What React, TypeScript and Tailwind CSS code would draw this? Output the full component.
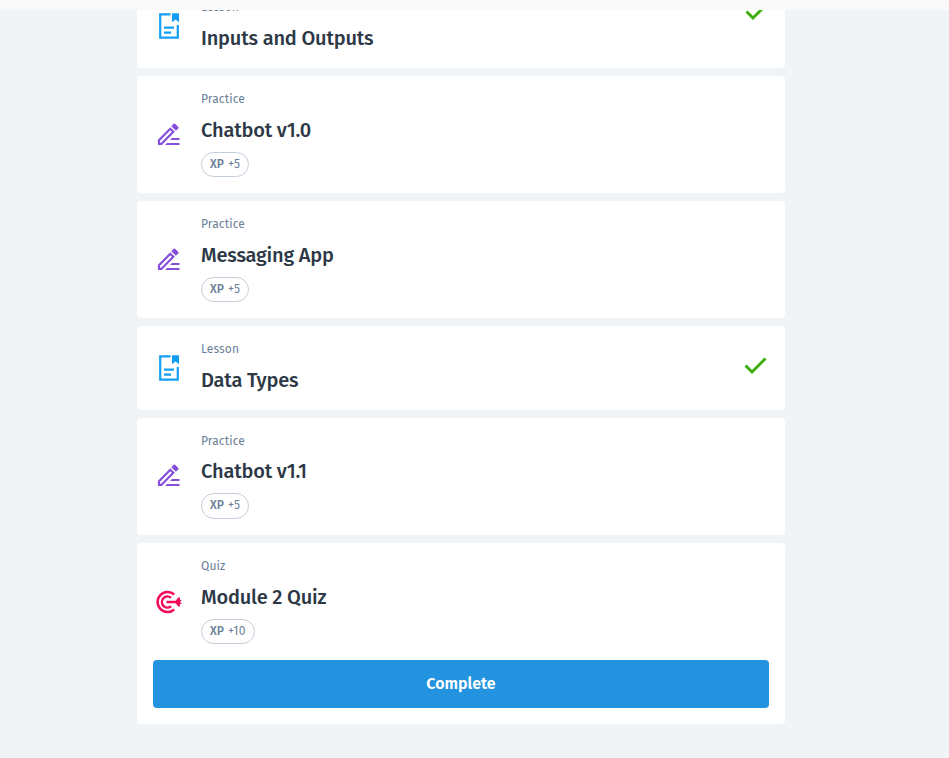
import React from "react";

type Kind = "Lesson" | "Practice" | "Quiz";

interface Item {
  kind: Kind;
  title: string;
  titleGap: string;
  iconGap?: string;
  badgeSize?: string;
  xp?: number;
  check?: string;
  action?: string;
}

const items: Item[] = [
  { kind: "Lesson", title: "Inputs and Outputs", titleGap: "mt-[10px]", check: "mr-[-4px] mb-[27px]" },
  { kind: "Practice", title: "Chatbot v1.0", titleGap: "mt-[10px]", xp: 5 },
  { kind: "Practice", title: "Messaging App", titleGap: "mt-[10px]", xp: 5 },
  { kind: "Lesson", title: "Data Types", titleGap: "mt-[10px]", check: "mr-[-3px] mb-[2px]" },
  {
    kind: "Practice",
    title: "Chatbot v1.1",
    titleGap: "mt-[9px]",
    iconGap: "mb-[2px]",
    badgeSize: "h-[26px] pb-[3px]",
    xp: 5,
  },
  { kind: "Quiz", title: "Module 2 Quiz", titleGap: "mt-[10px]", xp: 10, action: "Complete" },
];

function LessonIcon() {
  return (
    <svg width="32" height="32" viewBox="0 0 32 32" fill="none" stroke="#149ef2" strokeWidth="2.200">
      <path d="M17.500 4.300H7.200v23.400h17.600V15M11 17.600h10M11 22.600h7" />
      <path d="M19 3.200h7v9l-3.500-2.600L19 12.200z" fill="#149ef2" stroke="none" />
    </svg>
  );
}

function PracticeIcon() {
  return (
    <svg width="32" height="32" viewBox="0 -0.200 32 32" fill="none" stroke="#854fdc" strokeWidth="2.200">
      <path d="M6 24.700v-3.800L17.300 9.600l3 3L8.400 24.700z" />
      <path d="M18.300 7L20.700 4.600q.7-.7 1.400 0l3.200 3.200q.7.700 0 1.400L22.900 11.600z" fill="#854fdc" stroke="none" />
      <path d="M19 18.800H26.500v2.100H16.900zM14.100 23.700H26.500v2.100H12z" fill="#854fdc" stroke="none" />
    </svg>
  );
}

function QuizIcon() {
  return (
    <svg width="32" height="32" viewBox="0 0 32 32" fill="none" stroke="#f20a5c" strokeWidth="2.500">
      <path d="M21.200 8.500a10 10 0 1 0 0 15M18 11.800a5.500 5.500 0 1 0 0 8.400" />
      <path d="M13.500 16H24.500" />
      <path d="M21.700 16l3.500-4.600h1.700v2.600h2L27 16l1.900 2h-2v2.600h-1.700z" fill="#f20a5c" stroke="none" />
    </svg>
  );
}

const icons: Record<Kind, () => React.ReactElement> = {
  Lesson: LessonIcon,
  Practice: PracticeIcon,
  Quiz: QuizIcon,
};

function Card({ item }: { item: Item }) {
  const Icon = icons[item.kind];
  return (
    <section className="rounded bg-white p-4">
      <div className={`flex items-center ${item.xp !== undefined ? "h-[85px]" : "h-[52px]"}`}>
        <div className={`mr-4 h-8 w-8 shrink-0 ${item.iconGap ?? ""}`}>
          <Icon />
        </div>
        <div className="grow self-start">
          <p className="mt-px h-[13px] text-[12px] leading-[13px] tracking-[0.12px] text-[#6b8098]">{item.kind}</p>
          <h2 className={`h-7 text-[20px] leading-7 font-medium tracking-[-0.19px] text-[#2d3846] ${item.titleGap}`}>
            {item.title}
          </h2>
          {item.xp !== undefined && (
            <div
              className={`mt-2 flex w-fit items-center gap-1 rounded-full border border-[#c3cfdb] px-2 text-[12px] leading-none tracking-[0.12px] text-[#6b8098] ${item.badgeSize ?? "h-[25px] pb-px"}`}
            >
              <b className="font-medium">XP</b>
              <span>+{item.xp}</span>
            </div>
          )}
        </div>
        {item.check && (
          <svg
            width="32"
            height="32"
            viewBox="0 0 32 32"
            className={item.check}
            fill="none"
            stroke="#3daf0c"
            strokeWidth="3"
          >
            <path d="M5.500 14.500l6.500 6.500L25.500 7.500" />
          </svg>
        )}
      </div>
      {item.action && (
        <button className="mt-4 h-12 w-full rounded bg-[#2493df] text-[16px] font-semibold text-white">
          {item.action}
        </button>
      )}
    </section>
  );
}

export default function App() {
  return (
    <div className="flex h-[758px] w-[949px] flex-col overflow-hidden bg-[#f0f4f7] font-['Fira_Sans','Noto_Sans',sans-serif]">
      <header className="z-10 h-[10px] shrink-0 bg-[#f9f9f9]" />
      <main className="-mt-[26px] ml-[137px] flex w-[648px] flex-col gap-2">
        {items.map((item) => (
          <Card key={item.title} item={item} />
        ))}
      </main>
    </div>
  );
}
